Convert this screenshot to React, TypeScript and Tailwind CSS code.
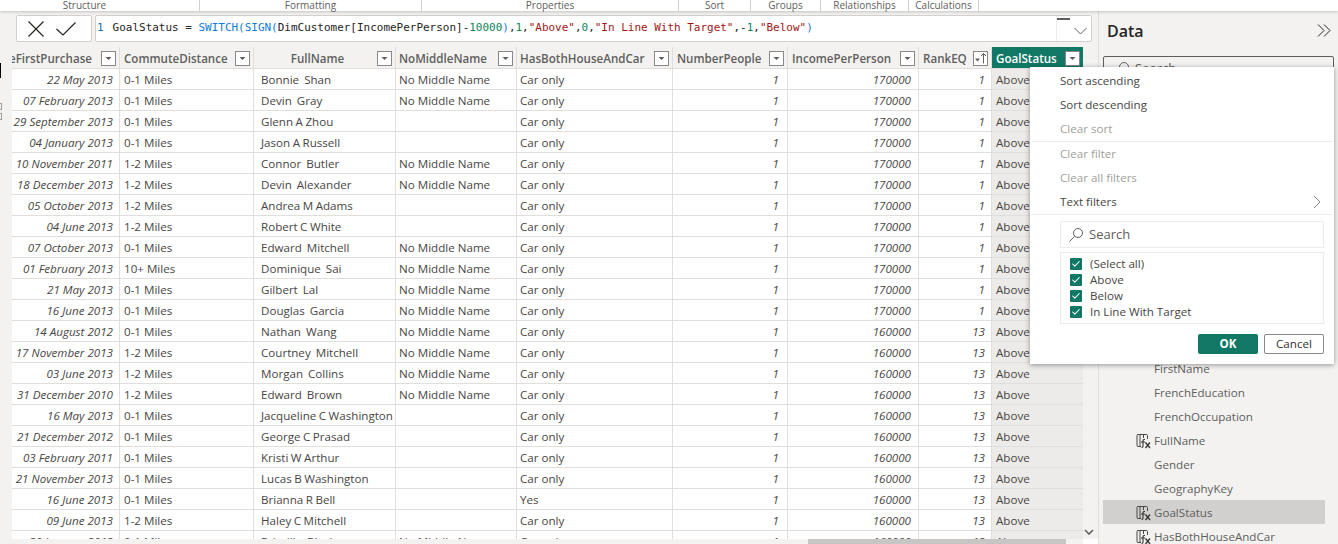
import { Check } from "lucide-react";

const font = "font-['Segoe_UI','Open_Sans','Liberation_Sans',sans-serif]";

const columns = [
  { name: "eFirstPurchase", w: "w-[108px]", head: "justify-end pr-[9px]", cell: "justify-end italic pr-[6px]" },
  { name: "CommuteDistance", w: "w-[134px]", head: "justify-start pl-[4px]", cell: "pl-[4px]" },
  { name: "FullName", w: "w-[142px]", head: "justify-center pl-[4px]", cell: "pl-[7px] [word-spacing:-0.5px]" },
  { name: "NoMiddleName", w: "w-[121px]", head: "justify-start pl-[3px]", cell: "pl-[3px]" },
  { name: "HasBothHouseAndCar", w: "w-[156px]", head: "justify-start pl-[3px]", cell: "pl-[3px]" },
  { name: "NumberPeople", w: "w-[115px]", head: "justify-start pl-[4px]", cell: "justify-end italic pr-[8px]" },
  { name: "IncomePerPerson", w: "w-[131px]", head: "justify-start pl-[4px]", cell: "justify-end italic pr-[7px]" },
  { name: "RankEQ", w: "w-[73px]", head: "justify-start pl-[4px]", cell: "justify-end italic pr-[6px]" },
  { name: "GoalStatus", w: "w-[91px]", head: "justify-start pl-[4px]", cell: "pl-[4px]" },
];

const rows = [
  ["22 May 2013", "0-1 Miles", "Bonnie  Shan", "No Middle Name", "Car only", "1", "170000", "1", "Above"],
  ["07 February 2013", "0-1 Miles", "Devin  Gray", "No Middle Name", "Car only", "1", "170000", "1", "Above"],
  ["29 September 2013", "0-1 Miles", "Glenn A Zhou", "", "Car only", "1", "170000", "1", "Above"],
  ["04 January 2013", "0-1 Miles", "Jason A Russell", "", "Car only", "1", "170000", "1", "Above"],
  ["10 November 2011", "1-2 Miles", "Connor  Butler", "No Middle Name", "Car only", "1", "170000", "1", "Above"],
  ["18 December 2013", "1-2 Miles", "Devin  Alexander", "No Middle Name", "Car only", "1", "170000", "1", "Above"],
  ["05 October 2013", "1-2 Miles", "Andrea M Adams", "", "Car only", "1", "170000", "1", "Above"],
  ["04 June 2013", "1-2 Miles", "Robert C White", "", "Car only", "1", "170000", "1", "Above"],
  ["07 October 2013", "0-1 Miles", "Edward  Mitchell", "No Middle Name", "Car only", "1", "170000", "1", "Above"],
  ["01 February 2013", "10+ Miles", "Dominique  Sai", "No Middle Name", "Car only", "1", "170000", "1", "Above"],
  ["21 May 2013", "0-1 Miles", "Gilbert  Lal", "No Middle Name", "Car only", "1", "170000", "1", "Above"],
  ["16 June 2013", "0-1 Miles", "Douglas  Garcia", "No Middle Name", "Car only", "1", "170000", "1", "Above"],
  ["14 August 2012", "0-1 Miles", "Nathan  Wang", "No Middle Name", "Car only", "1", "160000", "13", "Above"],
  ["17 November 2013", "1-2 Miles", "Courtney  Mitchell", "No Middle Name", "Car only", "1", "160000", "13", "Above"],
  ["03 June 2013", "1-2 Miles", "Morgan  Collins", "No Middle Name", "Car only", "1", "160000", "13", "Above"],
  ["31 December 2010", "1-2 Miles", "Edward  Brown", "No Middle Name", "Car only", "1", "160000", "13", "Above"],
  ["16 May 2013", "0-1 Miles", "Jacqueline C Washington", "", "Car only", "1", "160000", "13", "Above"],
  ["21 December 2012", "0-1 Miles", "George C Prasad", "", "Car only", "1", "160000", "13", "Above"],
  ["03 February 2011", "0-1 Miles", "Kristi W Arthur", "", "Car only", "1", "160000", "13", "Above"],
  ["21 November 2013", "0-1 Miles", "Lucas B Washington", "", "Car only", "1", "160000", "13", "Above"],
  ["16 June 2013", "0-1 Miles", "Brianna R Bell", "", "Yes", "1", "160000", "13", "Above"],
  ["09 June 2013", "1-2 Miles", "Haley C Mitchell", "", "Car only", "1", "160000", "13", "Above"],
  ["30 January 2013", "0-1 Miles", "Priscilla  Black", "No Middle Name", "Car only", "1", "160000", "13", "Above"],
];

const ribbonGroups = [
  { label: "Structure", w: "w-[200px]", pad: "pr-[30px]" },
  { label: "Formatting", w: "w-[222px]", pad: "" },
  { label: "Properties", w: "w-[257px]", pad: "" },
  { label: "Sort", w: "w-[72px]", pad: "" },
  { label: "Groups", w: "w-[70px]", pad: "" },
  { label: "Relationships", w: "w-[88px]", pad: "" },
  { label: "Calculations", w: "w-[70px]", pad: "" },
];

const fieldList = [
  { name: "FirstName" },
  { name: "FrenchEducation" },
  { name: "FrenchOccupation" },
  { name: "FullName", calc: true },
  { name: "Gender" },
  { name: "GeographyKey" },
  { name: "GoalStatus", calc: true, active: true },
  { name: "HasBothHouseAndCar", calc: true },
];

function FilterButton({ sorted }: { sorted?: boolean }) {
  return (
    <span className="ml-auto mt-[2px] flex h-[15px] w-[15px] shrink-0 items-center justify-center border border-[#8a8886] bg-white">
      <svg width="13" height="13" viewBox="0 0 13 13" fill="none">
        {sorted ? (
          <>
            <path d="M1 6.5h5L3.5 9.5z" fill="#605e5c" />
            <path d="M9.5 11.5V1.5M7 4l2.5-2.5L12 4" stroke="#605e5c" strokeWidth="1" />
          </>
        ) : (
          <path d="M3.5 5h6l-3 3z" fill="#605e5c" />
        )}
      </svg>
    </span>
  );
}

function CalcIcon() {
  return (
    <svg width="15" height="16" viewBox="0 0 15 16" fill="none" className="shrink-0">
      <path d="M5 13.5H2a1 1 0 0 1-1-1v-10a1 1 0 0 1 1-1h8.5a1 1 0 0 1 1 1V6" stroke="#484644" />
      <path d="M4 1.5v12M7.5 1.5V5" stroke="#484644" />
      <path d="M9 6.5H8a1 1 0 0 0-1 1V13a1.5 1.5 0 0 1-1.5 1.5M5 9h4" stroke="#323130" strokeWidth="1.1" />
      <path d="M9.5 9.5l4.5 5.5M14 9.5L9.5 15" stroke="#323130" strokeWidth="1.3" />
    </svg>
  );
}

function MenuItem({ label, disabled, arrow }: { label: string; disabled?: boolean; arrow?: boolean }) {
  return (
    <div className={`flex h-[24px] items-center pl-[30px] pr-[13px] ${disabled ? "text-[#a19f9d]" : "text-[#484644]"}`}>
      {label}
      {arrow && (
        <svg width="8" height="14" viewBox="0 0 8 14" fill="none" className="ml-auto">
          <path d="M1 1l6 6-6 6" stroke="#8a8886" />
        </svg>
      )}
    </div>
  );
}

function CheckRow({ label }: { label: string }) {
  return (
    <div className="flex h-[16px] items-center gap-[8px] text-[#484644]">
      <span className="flex h-[12px] w-[12px] items-center justify-center rounded-[1px] bg-[#117865]">
        <Check size={10} strokeWidth={2.5} className="text-white" />
      </span>
      {label}
    </div>
  );
}

function SearchGlyph() {
  return (
    <svg width="16" height="16" viewBox="0 0 16 16" fill="none" className="shrink-0">
      <circle cx="10" cy="6" r="4.5" stroke="#605e5c" />
      <path d="M6.7 9.3 1.5 14.5" stroke="#605e5c" />
    </svg>
  );
}

function FilterMenu() {
  return (
    <div className="absolute left-[1030px] top-[67px] z-20 w-[304px] bg-white pb-[10px] pt-[2px] text-[11.6px] shadow-[0_1px_5px_rgba(0,0,0,0.4)]">
      <MenuItem label="Sort ascending" />
      <MenuItem label="Sort descending" />
      <MenuItem label="Clear sort" disabled />
      <div className="mx-[2px] border-t border-[#edebe9]" />
      <MenuItem label="Clear filter" disabled />
      <MenuItem label="Clear all filters" disabled />
      <MenuItem label="Text filters" arrow />
      <div className="mx-[2px] mb-[6px] border-t border-[#edebe9]" />
      <div className="ml-[30px] mr-[10px]">
        <div className="flex h-[27px] items-center gap-[5px] border border-[#edebe9] pl-[7px] text-[13px] text-[#605e5c]">
          <SearchGlyph />
          Search
        </div>
        <div className="mt-[4px] flex h-[72px] flex-col justify-center border border-[#edebe9] pl-[9px]">
          <CheckRow label="(Select all)" />
          <CheckRow label="Above" />
          <CheckRow label="Below" />
          <CheckRow label="In Line With Target" />
        </div>
        <div className="mt-[10px] flex justify-end gap-[6px]">
          <button className="h-[20px] w-[60px] rounded-[2px] bg-[#117865] text-[11.6px] font-bold text-white">OK</button>
          <button className="h-[20px] w-[60px] rounded-[2px] border border-[#8a8886] bg-white text-[11.6px] text-[#323130]">Cancel</button>
        </div>
      </div>
    </div>
  );
}

export default function App() {
  return (
    <div className={`relative flex h-[544px] w-[1338px] flex-col overflow-hidden bg-[#f3f2f1] ${font}`}>
      {/* ribbon group labels */}
      <div className="z-10 flex h-[11px] shrink-0 items-center bg-white text-[10px] leading-[10px] text-[#605e5c] shadow-[0_1px_3px_rgba(0,0,0,0.2)]">
        {ribbonGroups.map((g) => (
          <div key={g.label} className={`${g.w} ${g.pad} flex h-full shrink-0 justify-center border-r border-[#d2d0ce]`}>
            {g.label}
          </div>
        ))}
      </div>

      <div className="flex min-h-0 flex-1">
        <div className="flex w-[1098px] shrink-0 flex-col">
          {/* formula bar */}
          <div className="mt-[4px] flex h-[27px] shrink-0 gap-[3px] pl-[16px]">
            <div className="flex w-[76px] items-center gap-[12px] rounded-[2px] border border-[#d2d0ce] bg-white pl-[11px]">
              <svg width="16" height="16" viewBox="0 0 16 16" fill="none">
                <path d="M.5.5l15 15M15.5.5l-15 15" stroke="#252423" strokeWidth="1.2" />
              </svg>
              <svg width="20" height="14" viewBox="0 0 20 14" fill="none">
                <path d="M.5 7l6.5 6L19.5.5" stroke="#252423" strokeWidth="1.2" />
              </svg>
            </div>
            <div className="flex w-[997px] items-center rounded-[2px] border border-[#d2d0ce] bg-white pl-[1px] font-['DejaVu_Sans_Mono',monospace] text-[10.98px] text-[#252423]">
              <span className="text-[#2b6cb0]">1</span>
              <span className="ml-[9px] whitespace-pre">
                GoalStatus = <span className="text-[#0f7be0]">SWITCH(SIGN(</span>DimCustomer[IncomePerPerson]<span>-</span><span className="text-[#098658]">10000</span><span className="text-[#0f7be0]">)</span>,<span className="text-[#098658]">1</span>,<span className="text-[#a31515]">"Above"</span>,<span className="text-[#098658]">0</span>,<span className="text-[#a31515]">"In Line With Target"</span>,-<span className="text-[#098658]">1</span>,<span className="text-[#a31515]">"Below"</span><span className="text-[#0f7be0]">)</span>
              </span>
              <div className="ml-auto flex h-full w-[35px] flex-col border-l border-[#edebe9]">
                <div className="mt-[2px] h-[2px] w-[13px] bg-[#605e5c]" />
                <svg width="13" height="8" viewBox="0 0 13 8" fill="none" className="ml-[17px] mt-[7px]">
                  <path d="M.5 1l6 6 6-6" stroke="#605e5c" />
                </svg>
              </div>
            </div>
          </div>

          {/* data grid */}
          <div className="relative ml-[12px] mt-[5px] min-h-0 flex-1 overflow-hidden text-[11.6px] text-[#484644]">
            <div className="flex h-[22px] border-b border-[#e1dfdd] bg-[#f3f2f1] font-semibold text-[#605e5c]">
              {columns.map((c, i) => {
                const active = c.name === "GoalStatus";
                return (
                  <div
                    key={c.name}
                    className={`${c.w} ${active ? "bg-[#117865] text-white" : "border-r border-[#e1dfdd]"} flex shrink-0 items-center pr-[3px]`}
                  >
                    <span className={`flex min-w-0 flex-1 overflow-hidden whitespace-nowrap pt-[2px] ${c.head}`}>{c.name}</span>
                    <FilterButton sorted={i === 7} />
                  </div>
                );
              })}
            </div>
            {rows.map((r, idx) => (
              <div key={idx} className="flex h-[21px] w-[1071px] border-b border-[#e1dfdd] bg-white">
                {columns.map((c, i) => (
                  <div
                    key={c.name}
                    className={`${c.w} ${i === 8 ? "bg-[#edebe9]" : "border-r border-[#e1dfdd]"} ${c.cell} flex shrink-0 items-center overflow-hidden whitespace-pre pt-[1px]`}
                  >
                    {r[i]}
                  </div>
                ))}
              </div>
            ))}
            <div className="absolute bottom-0 left-0 right-0 flex h-[5px] bg-[#f3f2f1]">
              <div className="ml-[796px] h-full w-[258px] bg-[#c8c6c4]" />
              <div className="ml-auto h-full w-[15px] bg-white" />
            </div>
          </div>
          <svg width="10" height="6" viewBox="0 0 10 6" fill="none" className="absolute left-[1084px] top-[529px]">
            <path d="M1 1l4 4 4-4" stroke="#605e5c" strokeWidth="1.6" />
          </svg>
        </div>

        {/* data pane */}
        <div className="relative flex min-w-0 flex-1 flex-col border-l border-[#e1dfdd] pl-[4px]">
          <div className="flex h-[38px] shrink-0 items-center pt-[1px]">
            <span className="ml-[4px] text-[16px] font-semibold text-[#252423]">Data</span>
            <svg width="14" height="13" viewBox="0 0 14 13" fill="none" className="ml-auto mr-[7px]">
              <path d="M1 .5l6 6-6 6M7 .5l6 6-6 6" stroke="#252423" />
            </svg>
          </div>
          <div className="mr-[4px] mt-[7px] flex h-[26px] shrink-0 items-center gap-[5px] rounded-[2px] border border-[#605e5c] pl-[10px] text-[13px] text-[#605e5c]">
            <SearchGlyph />
            Search
          </div>
          <div className="mt-[274px] flex shrink-0 flex-col text-[11.6px] text-[#605e5c]">
            {fieldList.map((f) => (
              <div key={f.name} className={`flex h-[24px] w-[222px] shrink-0 items-center pt-[2px] ${f.active ? "bg-[#d2d0ce]" : ""}`}>
                <span className="ml-[33px] flex w-[18px] shrink-0">{f.calc && <CalcIcon />}</span>
                {f.name}
              </div>
            ))}
          </div>
        </div>
      </div>

      {/* bits of the collapsed side rail */}
      <div className="absolute left-0 top-[63px] h-[15px] w-[1px] bg-black" />
      <div className="absolute left-0 top-[103px] h-[7px] w-[2px] border border-l-0 border-[#a19f9d]" />
      <div className="absolute left-0 top-[113px] h-[7px] w-[2px] border border-l-0 border-[#a19f9d]" />

      <FilterMenu />
    </div>
  );
}
